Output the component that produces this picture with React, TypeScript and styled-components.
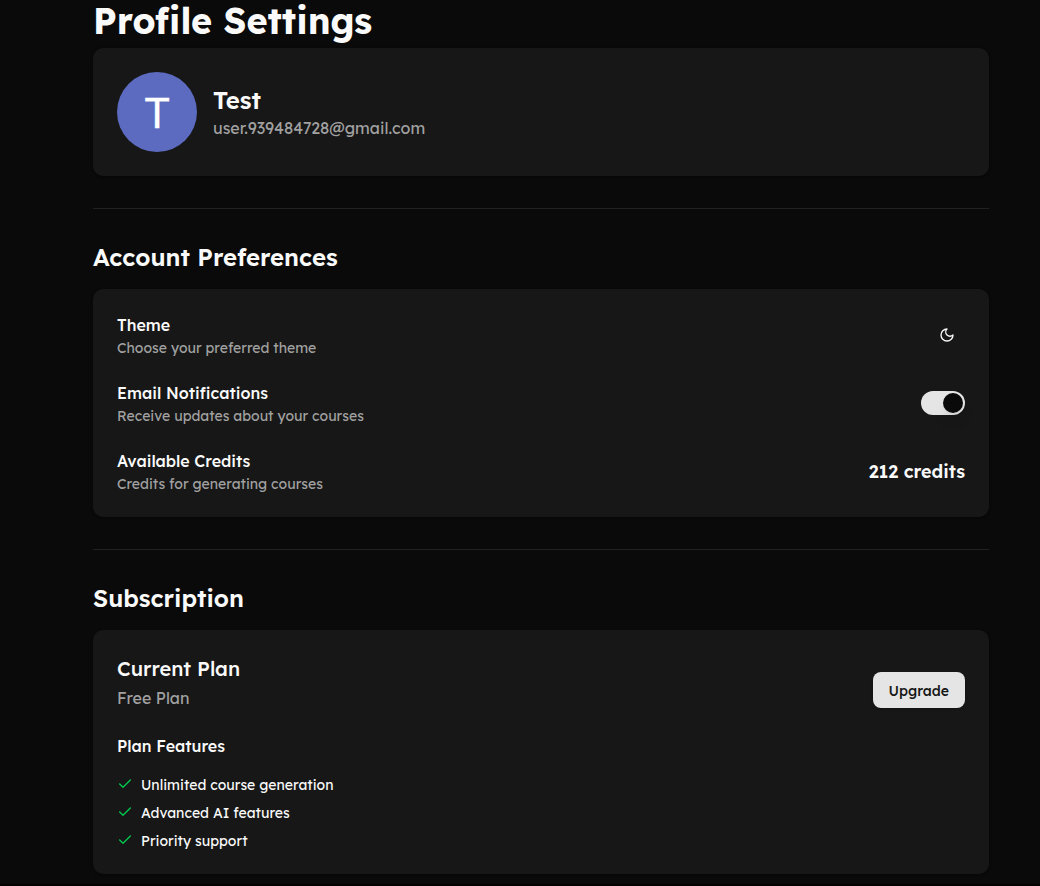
import React from "react";
import styled, { createGlobalStyle } from "styled-components";
import { Check } from "lucide-react";

const GlobalStyle = createGlobalStyle`
  *, *::before, *::after { box-sizing: border-box; }
  body {
    margin: 0;
    background: #0a0a0a;
    color: #fafafa;
    font-family: Lexend, Inter, sans-serif;
    -webkit-font-smoothing: antialiased;
    overflow: hidden;
  }
  h1, h2, h3, h4, p, ul { margin: 0; padding: 0; }
`;

const Page = styled.main`
  height: 886px;
  padding: 0 51px 0 93px;
  border-bottom: 2px solid #040002;
`;

/* $drop lowers the baseline by one pixel while the box keeps its height. */
const Text = styled.p<{ $size: number; $line: number; $weight?: number; $muted?: boolean; $drop?: boolean }>`
  width: max-content;
  padding-top: ${(p) => (p.$drop ? 2 : 0)}px;
  font-size: ${(p) => p.$size}px;
  line-height: ${(p) => (p.$drop ? p.$line - 2 : p.$line)}px;
  font-weight: ${(p) => p.$weight ?? 400};
  color: ${(p) => (p.$muted ? "#a1a1a1" : "#fafafa")};
  white-space: nowrap;
`;

const PageTitle = styled(Text)`
  margin-bottom: 8px;
`;

const SectionTitle = styled(Text)`
  margin-bottom: 16px;
`;

const Card = styled.section`
  padding: 24px;
  border-radius: 10px;
  background: #171717;
  box-shadow: 0 1px 3px rgba(0, 0, 0, 0.3), 0 1px 2px -1px rgba(0, 0, 0, 0.3);
`;

const Divider = styled.hr`
  height: 1px;
  margin: 32px 0;
  border: 0;
  background: #222;
`;

const Profile = styled.div`
  display: flex;
  align-items: center;
  gap: 16px;
`;

const Avatar = styled.div`
  display: flex;
  align-items: center;
  justify-content: center;
  width: 80px;
  height: 80px;
  padding-top: 2px;
  border-radius: 50%;
  background: #5c6bc0;
  color: #fff;
  font: 400 43px/78px Roboto, sans-serif;
  -webkit-text-stroke: 0.3px #fff;
`;

const Rows = styled.div`
  display: flex;
  flex-direction: column;
  gap: 24px;
`;

const Row = styled.div`
  display: flex;
  align-items: center;
  justify-content: space-between;
  height: 44px;
`;

const IconButton = styled.button`
  display: flex;
  align-items: center;
  justify-content: center;
  width: 36px;
  height: 36px;
  padding: 0;
  border: 0;
  background: transparent;
  color: #fafafa;
`;

const Switch = styled.button`
  display: flex;
  justify-content: flex-end;
  width: 44px;
  height: 24px;
  padding: 2px;
  border: 0;
  border-radius: 12px;
  background: #e5e5e5;
`;

const Thumb = styled.span`
  width: 20px;
  height: 20px;
  border-radius: 50%;
  background: #0a0a0a;
  box-shadow: 0 10px 15px -3px rgba(0, 0, 0, 0.1), 0 4px 6px -4px rgba(0, 0, 0, 0.1);
`;

const PlanHeader = styled.div`
  display: flex;
  align-items: center;
  justify-content: space-between;
  height: 72px;
  margin-bottom: 8px;
`;

const PlanInfo = styled.div`
  display: flex;
  flex-direction: column;
  gap: 4px;
  height: 100%;
`;

const UpgradeButton = styled.button`
  display: flex;
  align-items: center;
  justify-content: center;
  height: 36px;
  padding: 2px 16px 0;
  border: 0;
  border-radius: 8px;
  background: #e5e5e5;
  color: #171717;
  font: 500 14px/20px Lexend, Inter, sans-serif;
  box-shadow: 0 1px 2px rgba(0, 0, 0, 0.2);
`;

const Features = styled.ul`
  display: flex;
  flex-direction: column;
  gap: 8px;
  margin-top: 16px;
  list-style: none;
`;

const Feature = styled.li`
  display: flex;
  align-items: center;
  gap: 8px;
  height: 20px;
`;

const MoonIcon = () => (
  <svg width="16" height="16" viewBox="0 0 24 24" fill="none" stroke="currentColor" strokeWidth="2" strokeLinecap="round" strokeLinejoin="round">
    <path d="M12 3a6 6 0 0 0 9 9 9 9 0 1 1-9-9Z" />
  </svg>
);

const preferences = [
  { title: "Theme", detail: "Choose your preferred theme", control: <IconButton aria-label="Theme"><MoonIcon /></IconButton> },
  { title: "Email Notifications", detail: "Receive updates about your courses", control: <Switch role="switch" aria-checked aria-label="Email Notifications"><Thumb /></Switch> },
  { title: "Available Credits", detail: "Credits for generating courses", control: <Text $size={18} $line={28} $weight={600} $drop>212 credits</Text> },
];

const features = ["Unlimited course generation", "Advanced AI features", "Priority support"];

export default function App() {
  return (
    <>
      <GlobalStyle />
      <Page>
        <PageTitle as="h1" $size={36} $line={40} $weight={700} $drop>Profile Settings</PageTitle>
        <Card>
          <Profile>
            <Avatar>T</Avatar>
            <div>
              <Text as="h2" $size={24} $line={32} $weight={600}>Test</Text>
              <Text $size={16} $line={24} $muted>user.939484728@gmail.com</Text>
            </div>
          </Profile>
        </Card>
        <Divider />
        <SectionTitle as="h2" $size={24} $line={32} $weight={600}>Account Preferences</SectionTitle>
        <Card>
          <Rows>
            {preferences.map((item) => (
              <Row key={item.title}>
                <div>
                  <Text as="h3" $size={16} $line={24} $weight={500}>{item.title}</Text>
                  <Text $size={14} $line={20} $muted $drop>{item.detail}</Text>
                </div>
                {item.control}
              </Row>
            ))}
          </Rows>
        </Card>
        <Divider />
        <SectionTitle as="h2" $size={24} $line={32} $weight={600}>Subscription</SectionTitle>
        <Card>
          <PlanHeader>
            <PlanInfo>
              <Text as="h3" $size={20} $line={28} $weight={500} $drop>Current Plan</Text>
              <Text $size={16} $line={24} $muted>Free Plan</Text>
            </PlanInfo>
            <UpgradeButton>Upgrade</UpgradeButton>
          </PlanHeader>
          <Text as="h4" $size={16} $line={24} $weight={500}>Plan Features</Text>
          <Features>
            {features.map((label) => (
              <Feature key={label}>
                <Check size={16} color="#00c950" />
                <Text as="span" $size={14} $line={20} $drop>{label}</Text>
              </Feature>
            ))}
          </Features>
        </Card>
      </Page>
    </>
  );
}
